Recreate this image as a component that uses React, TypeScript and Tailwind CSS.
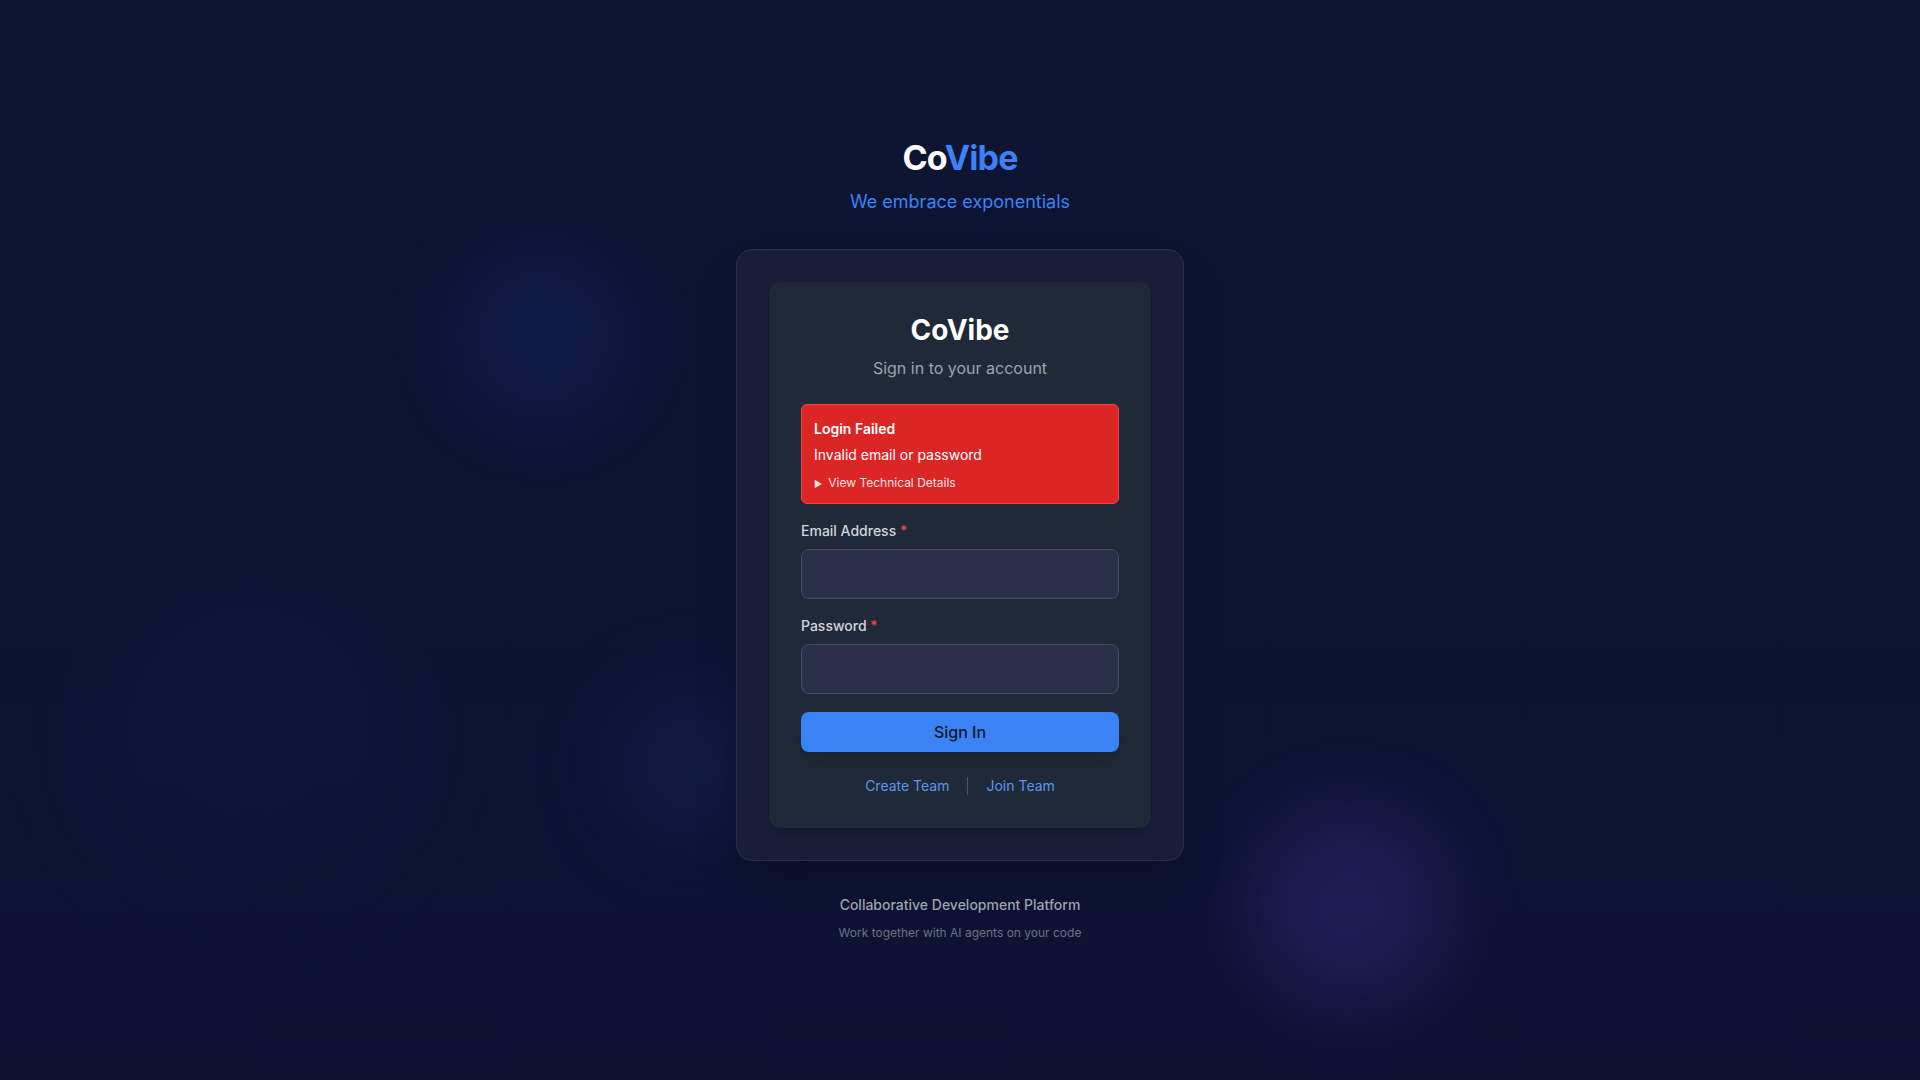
// Login page - CoVibe sign-in with failed login state

function Blobs() {
  return (
    <div className="pointer-events-none absolute inset-0 overflow-hidden">
      <div className="absolute left-[462px] top-[256px] h-[160px] w-[160px] rounded-full bg-[#12276a] opacity-40 blur-[36px]" />
      <div className="absolute left-[616px] top-[690px] h-[150px] w-[150px] rounded-full bg-[#0f2a55] opacity-40 blur-[40px]" />
      <div className="absolute left-[1250px] top-[805px] h-[200px] w-[200px] rounded-full bg-[#33287a] opacity-45 blur-[32px]" />
      <div className="absolute left-[120px] top-[600px] h-[260px] w-[260px] rounded-full bg-[#12305a] opacity-15 blur-[70px]" />
    </div>
  );
}

function Field({ label, type }: { label: string; type: string }) {
  return (
    <div>
      <label className="mb-2 block text-sm font-medium text-[#d1d5db]">
        {label} <span className="text-[#ef4444]">*</span>
      </label>
      <input
        type={type}
        className="block w-full rounded-lg border border-[#454a66] bg-[#2b2f4a] px-4 py-3 text-base text-white outline-none"
      />
    </div>
  );
}

export default function App() {
  return (
    <div
      className="relative flex min-h-screen items-center justify-center bg-gradient-to-b from-[#0c1532] to-[#0f1133] text-white"
      style={{ fontFamily: 'Inter, "Noto Sans", sans-serif' }}
    >
      <Blobs />

      <div className="relative z-10 mb-[1px] flex w-[448px] flex-col items-center">
        {/* Header */}
        <h1 className="text-[34px] leading-10 font-bold tracking-tight text-white">
          Co<span className="text-[#3b82f6]">Vibe</span>
        </h1>
        <p className="mt-2.5 text-lg text-[#3b82f6]">We embrace exponentials</p>

        {/* Outer card */}
        <div className="mt-[33px] w-full rounded-2xl border border-[#2a2e4a] bg-[#1a1d38] p-8 shadow-2xl">
          {/* Inner card */}
          <div className="rounded-xl bg-[#1f2937] px-8 pb-8 pt-[30px] shadow-lg">
            <div className="text-center">
              <h2 className="text-[28px] leading-9 font-bold text-white">CoVibe</h2>
              <p className="mt-2 text-base text-[#9ca3af]">Sign in to your account</p>
            </div>

            {/* Error */}
            <div className="mt-6 rounded-md border border-[#ef4444] bg-[#dc2626] px-3 pb-3 pt-3.5">
              <p className="text-sm font-semibold text-white">Login Failed</p>
              <p className="mt-1.5 text-sm text-white">Invalid email or password</p>
              <div className="mt-2.5 flex items-center gap-1.5 text-xs text-[#fde2e2]">
                <span className="text-[9px] leading-none">▶</span>
                <span>View Technical Details</span>
              </div>
            </div>

            <div className="mt-[17px]">
              <Field label="Email Address" type="email" />
            </div>
            <div className="mt-[17px]">
              <Field label="Password" type="password" />
            </div>

            <button className="mt-[18px] w-full rounded-lg bg-[#3b82f6] py-2 text-base font-medium text-[#111827] shadow-lg">
              Sign In
            </button>

            <div className="mt-6 flex items-center justify-center text-sm text-[#5b96eb]">
              <a>Create Team</a>
              <span className="mx-[18px] h-[18px] w-px bg-[#4b5563]" />
              <a>Join Team</a>
            </div>
          </div>
        </div>

        {/* Footer */}
        <p className="mt-[34px] text-sm font-medium text-[#9ca3af]">
          Collaborative Development Platform
        </p>
        <p className="mt-2.5 text-xs text-[#6b7280]">Work together with AI agents on your code</p>
      </div>
    </div>
  );
}
